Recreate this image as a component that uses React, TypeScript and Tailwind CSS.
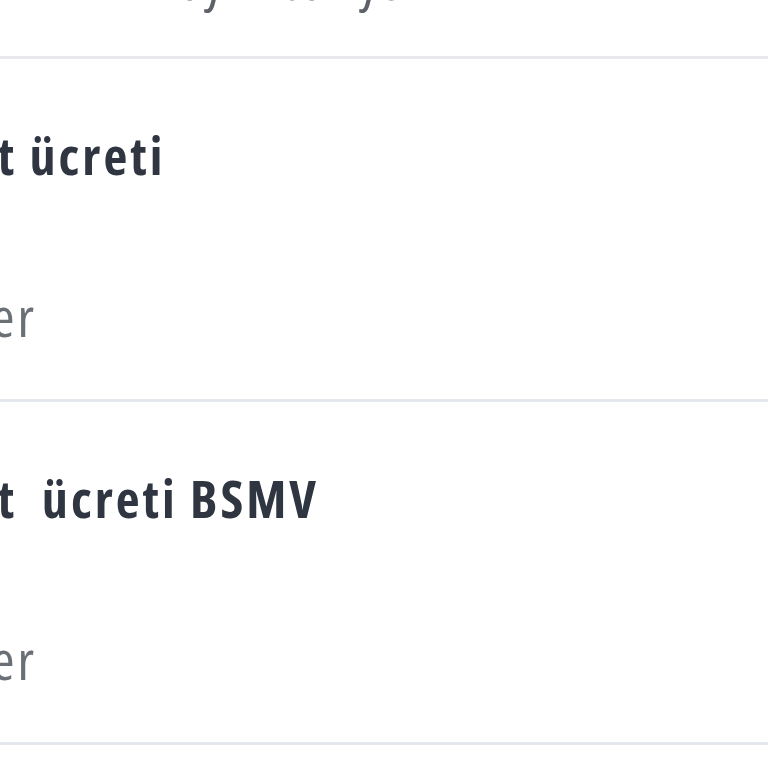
import React from 'react';

type Fee = {
  title: string;
  category: string;
};

const fees: Fee[] = [
  { title: 'Kart ücreti', category: 'Diğer' },
  { title: 'Kart  ücreti BSMV', category: 'Diğer' },
];

function FeeRow({ fee }: { fee: Fee }) {
  return (
    <div className="h-[343px] overflow-hidden pt-[70px] border-b-[3px] border-[#e4e8ed]">
      <p className="-ml-[80px] whitespace-pre text-[52px] leading-none font-bold font-stretch-semi-condensed tracking-[3px] text-[#2f3641]">
        {fee.title}
      </p>
      <p className="mt-[107px] -ml-[78px] whitespace-pre text-[55px] leading-none font-stretch-semi-condensed tracking-[3px] text-[#6b7077]">
        {fee.category}
      </p>
    </div>
  );
}

export default function App() {
  return (
    <div
      className="h-screen w-full overflow-hidden bg-white"
      style={{ fontFamily: '"Open Sans", "Noto Sans", sans-serif' }}
    >
      {/* previous row, mostly scrolled out of view */}
      <div className="h-[59px] overflow-hidden border-b-[3px] border-[#e7e9ec]">
        <p className="-mt-[49px] ml-[181px] whitespace-pre text-[55px] leading-none font-stretch-semi-condensed text-[#5d6168]">
          aylık bakiye
        </p>
      </div>
      {fees.map((fee) => (
        <FeeRow key={fee.title} fee={fee} />
      ))}
    </div>
  );
}
